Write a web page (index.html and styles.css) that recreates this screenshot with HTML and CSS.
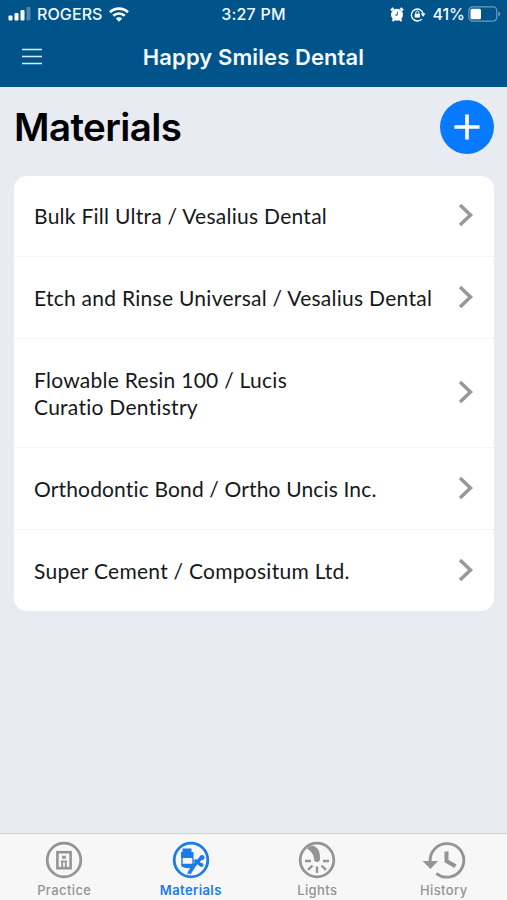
FILE: index.html
```html
<!DOCTYPE html>
<html lang="en">
<head>
  <meta charset="UTF-8" />
  <meta name="viewport" content="width=device-width, initial-scale=1.0" />
  <title>Happy Smiles Dental</title>
  <link rel="stylesheet" href="styles.css">
</head>
<body>
  <header>
    <div class="status">
      <div class="status-left">
        <svg class="signal" width="23" height="14" viewBox="0 0 23 14" fill="#fff">
          <rect x="0.5" y="8.5" width="4" height="5" rx="1" />
          <rect x="6.5" y="6" width="4" height="7.5" rx="1" />
          <rect x="12.5" y="3" width="4" height="10.5" rx="1" />
          <rect x="18.5" y="0" width="4" height="13.5" rx="1" opacity="0.3" />
        </svg>
        <span class="carrier">ROGERS</span>
        <svg class="wifi" width="20" height="15" viewBox="0 0 20 15">
          <path d="M1 5.3a13 13 0 0 1 18 0M4.3 8.8a8.2 8.2 0 0 1 11.4 0" fill="none" stroke="#fff" stroke-width="2.7" />
          <path d="M10 14.8l-3.2-3.3a4.6 4.6 0 0 1 6.4 0z" fill="#fff" />
        </svg>
      </div>
      <span class="time">3:27 PM</span>
      <div class="status-right">
        <svg width="14" height="15" viewBox="0 0 14 15">
          <path d="M1 3.5L3.5 1M13 3.5L10.5 1M2.5 14l2-2M11.5 14l-2-2" stroke="#fff" stroke-width="2.4" />
          <circle cx="7" cy="7.7" r="6" fill="#fff" />
          <path d="M7.4 4.8v3.3H5" fill="none" stroke="#01548a" stroke-width="0.9" />
        </svg>
        <svg class="lock" width="16" height="15" viewBox="0 0 16 15">
          <path d="M11.8 12.1A6 6 0 1 1 13.3 7" fill="none" stroke="#fff" stroke-width="1.4" />
          <path d="M10.6 6.6h5l-2.5 3.2z" fill="#fff" />
          <rect x="4.7" y="6.8" width="5.2" height="3.8" rx="0.6" fill="#fff" />
          <path d="M5.8 7V5.5a1.5 1.5 0 0 1 3 0V7" fill="none" stroke="#fff" />
        </svg>
        <span class="percent">41%</span>
        <svg class="battery" width="33" height="16" viewBox="0 0 33 16">
          <rect x="0.8" y="0.8" width="28" height="14.4" rx="4" fill="none" stroke="#6d9dbd" stroke-width="1.2" />
          <rect x="2.5" y="2.8" width="10.5" height="10.4" rx="1.5" fill="#fff" />
          <path d="M30.3 5.4v5.2q2-0.8 2-2.6t-2-2.6z" fill="#6d9dbd" />
        </svg>
      </div>
    </div>
    <div class="navbar">
      <button class="menu" aria-label="Menu">
        <svg width="20" height="18" viewBox="0 0 20 18" stroke="#d9eefb" stroke-width="1.6">
          <path d="M0 1.500h20M0 8.500h20M0 15.500h20" />
        </svg>
      </button>
      <span class="practice-name">Happy Smiles Dental</span>
    </div>
  </header>

  <main>
    <div class="title-row">
      <h1>Materials</h1>
      <button class="add" aria-label="Add material">
        <svg width="26" height="26" viewBox="0 0 26 26" stroke="#fff" stroke-width="3.6">
          <path d="M13 0.5v25M0.5 13h25" />
        </svg>
      </button>
    </div>

    <ul class="list">
      <li>
        <span class="name">Bulk Fill Ultra / Vesalius Dental</span>
        <svg class="chevron" width="16" height="24" viewBox="0 0 16 24"><path d="M2 2l10.5 10L2 22" /></svg>
      </li>
      <li>
        <span class="name">Etch and Rinse Universal / Vesalius Dental</span>
        <svg class="chevron" width="16" height="24" viewBox="0 0 16 24"><path d="M2 2l10.5 10L2 22" /></svg>
      </li>
      <li>
        <span class="name">Flowable Resin 100 / Lucis<br>Curatio Dentistry</span>
        <svg class="chevron" width="16" height="24" viewBox="0 0 16 24"><path d="M2 2l10.5 10L2 22" /></svg>
      </li>
      <li>
        <span class="name name-tight">Orthodontic Bond / Ortho Uncis Inc.</span>
        <svg class="chevron" width="16" height="24" viewBox="0 0 16 24"><path d="M2 2l10.5 10L2 22" /></svg>
      </li>
      <li>
        <span class="name">Super Cement / Compositum Ltd.</span>
        <svg class="chevron" width="16" height="24" viewBox="0 0 16 24"><path d="M2 2l10.5 10L2 22" /></svg>
      </li>
    </ul>
  </main>

  <nav class="tabs">
    <a class="tab">
      <svg width="38" height="38" viewBox="0 0 38 38" fill="none" stroke="currentColor">
        <circle cx="19" cy="19" r="16.8" stroke-width="2.8" />
        <rect x="12.4" y="11.2" width="13.2" height="16" stroke-width="2.6" />
        <path d="M17.200 28v-7.200M20.800 28v-7.200M16 20.400h6" stroke-width="1.8" />
        <rect x="17.200" y="14.800" width="3.600" height="3" fill="currentColor" stroke="none" />
      </svg>
      <span>Practice</span>
    </a>
    <a class="tab active">
      <svg width="38" height="38" viewBox="0 0 38 38" fill="none" stroke="currentColor">
        <circle cx="19" cy="19" r="16.8" stroke-width="2.8" />
        <path d="M10.500 7.500h9V11h2v6H9v-6h1.500z" fill="currentColor" stroke="none" />
        <path d="M10 17v6.500h11V17" stroke-width="1.4" />
        <path d="M9.500 23h13L15 35q1-5 3.500-8-5 1-9-1.500z" fill="currentColor" stroke="none" />
        <path d="M17 32.500l5.500-8.500 6.500-7" stroke-width="3.4" />
        <path d="M22.500 19l6.500 5" stroke-width="3" />
        <circle cx="30" cy="16.500" r="2.500" fill="currentColor" stroke="none" />
        <circle cx="29.500" cy="24" r="2" fill="currentColor" stroke="none" />
      </svg>
      <span>Materials</span>
    </a>
    <a class="tab">
      <svg width="38" height="38" viewBox="0 0 38 38" fill="none" stroke="currentColor">
        <circle cx="19" cy="19" r="16.8" stroke-width="2.8" />
        <path d="M9 7.500Q12.500 3.500 17 5.500Q22.500 8.500 22 18a3 3 0 0 1-6 0Q16 12 9 7.500z" fill="currentColor" stroke="none" />
        <path d="M7 20h6M25 20h6M19 25.500V32M14.500 24.500l-4.500 4.300M23.500 24.500l4.500 4.300" stroke-width="2.400" />
      </svg>
      <span>Lights</span>
    </a>
    <a class="tab">
      <svg class="history" width="44" height="38" viewBox="0 0 44 38" fill="none" stroke="currentColor">
        <path d="M8.500 22.500A16.800 16.800 0 1 1 14.300 32.300" stroke-width="2.800" />
        <path d="M0.500 20h15.500l-7.500 8z" fill="currentColor" stroke="none" />
        <path d="M24.500 10.500V20l9 5.300" stroke-width="4" />
      </svg>
      <span>History</span>
    </a>
  </nav>
</body>
</html>
```
FILE: styles.css
```css
* {
  box-sizing: border-box;
}
body {
  margin: 0;
  height: 900px;
  display: flex;
  flex-direction: column;
  overflow: hidden;
  font-family: Inter, "Liberation Sans", sans-serif;
  background-color: #e8ebf1;
  color: #000;
}
button {
  border: none;
  padding: 0;
  background: none;
  cursor: pointer;
}
svg {
  display: block;
  flex-shrink: 0;
}
header {
  height: 87px;
  background-color: #01548a;
  color: #f2faff;
}
.status {
  height: 28px;
  display: grid;
  grid-template-columns: 1fr auto 1fr;
  align-items: center;
  font-size: 16px;
  font-weight: 500;
}
.status-left, .status-right {
  display: flex;
  align-items: center;
}
.status-left {
  padding-left: 8px;
}
.status-right {
  justify-content: flex-end;
  padding-right: 6px;
}
.carrier {
  margin: 0 6px 0 6px;
  letter-spacing: 0.1px;
}
.time {
  letter-spacing: 0.2px;
}
.lock {
  margin: 0 6px;
}
.percent {
  margin-right: 3px;
}
.navbar {
  height: 58px;
  display: grid;
  grid-template-columns: 54px 1fr 54px;
  align-items: center;
}
.menu {
  padding-left: 22px;
}
.practice-name {
  text-align: center;
  font-size: 22px;
  font-weight: 600;
  letter-spacing: 0.1px;
}
main {
  flex: 1;
  padding: 13px 13px 0 14px;
}
.title-row {
  height: 54px;
  display: flex;
  justify-content: space-between;
  align-items: center;
}
h1 {
  margin: 0;
  font-size: 38.5px;
  font-weight: 600;
  letter-spacing: -0.6px;
}
.add {
  width: 54px;
  height: 54px;
  border-radius: 50%;
  background-color: #077aff;
  display: flex;
  align-items: center;
  justify-content: center;
}
.list {
  margin: 22px 0 0;
  padding: 0;
  list-style: none;
  background: #fff;
  border-radius: 13px;
}
.list li {
  display: flex;
  justify-content: space-between;
  align-items: center;
  padding: 27px 20px 27px 20px;
  border-bottom: 1px solid #f4f5f7;
}
.list li:first-child {
  padding-top: 26px;
}
.list li:last-child {
  border-bottom: none;
}
.name {
  font-family: Lato, sans-serif;
  font-size: 21px;
  line-height: 27px;
  letter-spacing: 0.27px;
  color: #16181a;
  white-space: nowrap;
}
.name-tight {
  letter-spacing: 0.15px;
}
.chevron {
  margin-bottom: 2px;
  fill: none;
  stroke: #999;
  stroke-width: 3.5;
}
.tabs {
  height: 67px;
  display: grid;
  grid-template-columns: repeat(4, 1fr);
  padding-left: 1px;
  background-color: #f7f7f8;
  border-top: 1px solid #cfd1d5;
}
.tab {
  display: flex;
  flex-direction: column;
  align-items: center;
  padding-top: 7px;
  color: #949494;
  font-size: 13px;
  font-weight: 500;
  line-height: 16px;
  letter-spacing: 0.4px;
}
.tab span {
  margin-top: 3px;
}
.active {
  color: #1a7bea;
  font-weight: 600;
}
```
